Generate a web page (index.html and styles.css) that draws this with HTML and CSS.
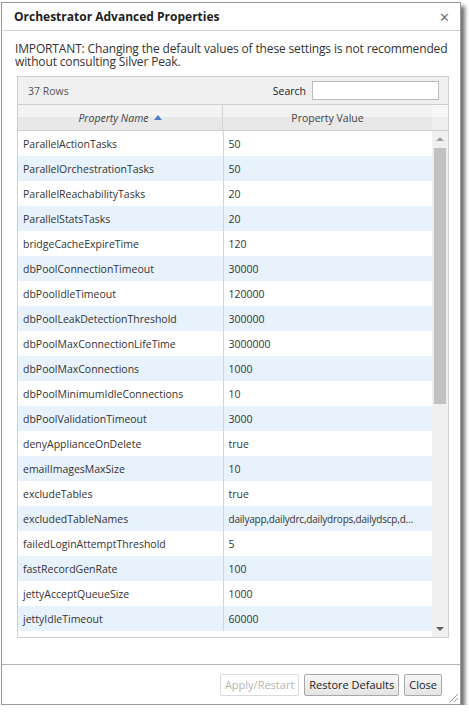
FILE: index.html
```html
<!DOCTYPE html>
<html>
<head>
  <title>Orchestrator Advanced Properties</title>
  <link rel="stylesheet" href="styles.css">
</head>
<body>

<div class="dialog">
  <div class="dlg-title">
    <span>Orchestrator Advanced Properties</span>
    <span class="dlg-close">&#x2715;</span>
  </div>

  <div class="dlg-body">
    <p class="warn">IMPORTANT: Changing the default values of these settings is not recommended without consulting Silver Peak.</p>

    <div class="grid">
      <div class="grid-toolbar">
        <span class="row-count">37 Rows</span>
        <label class="search">Search <input type="text"></label>
      </div>

      <div class="grid-head">
        <div class="hcell name-col"><i>Property Name</i> <span class="sort-up"></span></div>
        <div class="hcell value-col">Property Value</div>
        <div class="hcell scroll-col"></div>
      </div>

      <div class="grid-body">
        <div class="rows-wrap">
          <table class="rows">
            <tr><td class="name-col">ParallelActionTasks</td><td>50</td></tr>
            <tr><td class="name-col">ParallelOrchestrationTasks</td><td>50</td></tr>
            <tr><td class="name-col">ParallelReachabilityTasks</td><td>20</td></tr>
            <tr><td class="name-col">ParallelStatsTasks</td><td>20</td></tr>
            <tr><td class="name-col">bridgeCacheExpireTime</td><td>120</td></tr>
            <tr><td class="name-col">dbPoolConnectionTimeout</td><td>30000</td></tr>
            <tr><td class="name-col">dbPoolIdleTimeout</td><td>120000</td></tr>
            <tr><td class="name-col">dbPoolLeakDetectionThreshold</td><td>300000</td></tr>
            <tr><td class="name-col">dbPoolMaxConnectionLifeTime</td><td>3000000</td></tr>
            <tr><td class="name-col">dbPoolMaxConnections</td><td>1000</td></tr>
            <tr><td class="name-col">dbPoolMinimumIdleConnections</td><td>10</td></tr>
            <tr><td class="name-col">dbPoolValidationTimeout</td><td>3000</td></tr>
            <tr><td class="name-col">denyApplianceOnDelete</td><td>true</td></tr>
            <tr><td class="name-col">emailImagesMaxSize</td><td>10</td></tr>
            <tr><td class="name-col">excludeTables</td><td>true</td></tr>
            <tr><td class="name-col">excludedTableNames</td><td class="long">dailyapp,dailydrc,dailydrops,dailydscp,d...</td></tr>
            <tr><td class="name-col">failedLoginAttemptThreshold</td><td>5</td></tr>
            <tr><td class="name-col">fastRecordGenRate</td><td>100</td></tr>
            <tr><td class="name-col">jettyAcceptQueueSize</td><td>1000</td></tr>
            <tr><td class="name-col">jettyIdleTimeout</td><td>60000</td></tr>
          </table>
        </div>

        <!-- fake scrollbar -->
        <div class="vscroll">
          <span class="arrow up"></span>
          <div class="thumb"></div>
          <span class="arrow down"></span>
        </div>
      </div>
    </div>
  </div>

  <div class="dlg-foot">
    <button disabled>Apply/Restart</button>
    <button>Restore Defaults</button>
    <button>Close</button>
    <span class="grip"></span>
  </div>
</div>

</body>
</html>
```

FILE: styles.css
```css
body { margin: 0; background: #fff; font-family: "Open Sans", "Liberation Sans", sans-serif; color: #333; }

.dialog { position: relative; margin: 2px 0 0 1px; width: 460px; height: 703px; border: 1px solid #9a9a9a; background: #fff; box-shadow: 4px 4px 4px rgba(0,0,0,.55); display: flex; flex-direction: column; box-sizing: border-box; }

.dlg-title { height: 28px; flex: none; display: flex; align-items: center; justify-content: space-between; padding: 0 10px 0 12px; border-bottom: 1px solid #d0d0d0; font-size: 12px; font-weight: bold; color: #222; box-sizing: border-box; }
.dlg-close { font-size: 13px; font-weight: normal; color: #777; }

.dlg-body { flex: 1; padding: 11px 0 0 13px; }
.warn { margin: 0 0 8px; font-size: 12px; line-height: 13px; color: #333; letter-spacing: -0.15px; }

.grid { width: 432px; margin-left: 2px; border: 1px solid #cfcfcf; font-size: 10.5px; box-sizing: border-box; }
.grid-toolbar { height: 28px; background: #f0f0f0; display: flex; align-items: center; justify-content: space-between; padding: 0 9px 0 10px; border-bottom: 1px solid #cfcfcf; box-sizing: border-box; }
.row-count { color: #555; }
.search { color: #222; display: flex; align-items: center; gap: 6px; }
.search input { width: 127px; height: 19px; border: 1px solid #bbb; padding: 0 3px; box-sizing: border-box; }

.grid-head { display: flex; height: 26px; background: linear-gradient(#f3f3f3 50%, #e8e8e8 50%); border-bottom: 1px solid #cfcfcf; box-sizing: border-box; }
.hcell { display: flex; align-items: center; justify-content: center; color: #444; box-sizing: border-box; }
.hcell.name-col { width: 205px; border-right: 1px solid #d4d4d4; }
.hcell.value-col { flex: 1; }
.hcell.scroll-col { width: 16px; flex: none; background: linear-gradient(#f7f7f7 50%, #eeeeee 50%); }
.sort-up { display: inline-block; margin-left: 5px; border: 4px solid transparent; border-bottom: 5px solid #4a7fc1; border-top: 0; }

.grid-body { display: flex; height: 506px; overflow: hidden; }
.rows-wrap { flex: 1; min-width: 0; }
.rows { width: 100%; border-collapse: collapse; table-layout: fixed; }
.rows td { height: 25px; padding: 0 5px; white-space: nowrap; overflow: hidden; color: #333; box-sizing: border-box; }
.rows td.name-col { width: 205px; border-right: 1px solid #d4d4d4; }
.rows td.long { font-size: 10px; letter-spacing: -0.2px; }
.rows tr:nth-child(even) { background: #e8f2fc; }

.vscroll { width: 16px; flex: none; background: #f0f0f0; position: relative; }
.thumb { position: absolute; left: 2px; right: 2px; top: 17px; height: 256px; background: #c1c1c1; }
.arrow { position: absolute; left: 4px; border: 4px solid transparent; }
.arrow.up { top: 6px; border-bottom: 4px solid #a3a3a3; border-top: 0; }
.arrow.down { bottom: 6px; border-top: 4px solid #606060; border-bottom: 0; }

.dlg-foot { height: 40px; flex: none; border-top: 1px solid #b4b4b4; display: flex; justify-content: flex-end; align-items: center; gap: 5px; padding: 0 18px 0 0; box-sizing: border-box; position: relative; }
.dlg-foot button { height: 22px; font: 11px "Open Sans", "Liberation Sans", sans-serif; color: #222; background: linear-gradient(#f7f7f7, #e4e4e4); border: 1px solid #a8a8a8; border-radius: 2px; padding: 0 4px; }
.dlg-foot button:disabled { color: #b5b5b5; background: #fff; border-color: #dcdcdc; }
.grip { position: absolute; right: 2px; bottom: 2px; width: 10px; height: 10px; background: repeating-linear-gradient(135deg, transparent 0 2px, #999 2px 3px); clip-path: polygon(100% 0, 100% 100%, 0 100%); }
```
